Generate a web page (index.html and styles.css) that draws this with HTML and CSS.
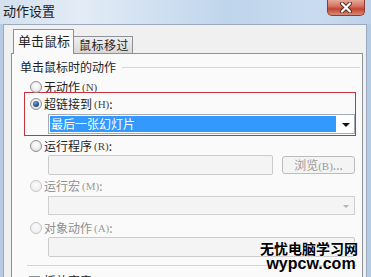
FILE: index.html
```html
<!DOCTYPE html>
<html lang="zh-CN">

<head>
    <meta charset="UTF-8">
    <meta name="viewport" content="width=device-width, initial-scale=1.0">
    <title>动作设置</title>
    <link rel="stylesheet" href="styles.css">
</head>

<body>
    <div class="window">
        <div class="titlebar">
            <span class="title">动作设置</span>
            <div class="close">
                <svg width="14" height="11" viewBox="0 0 14 11">
                    <path d="M3 1.5 L11 9.5 M11 1.5 L3 9.5" stroke="#5a2a22" stroke-width="4" stroke-linecap="round" />
                    <path d="M3 1.5 L11 9.5 M11 1.5 L3 9.5" stroke="#ffffff" stroke-width="2.2" stroke-linecap="round" />
                </svg>
            </div>
        </div>

        <div class="frame">
            <div class="tabs">
                <div class="tab active">单击鼠标</div>
                <div class="tab">鼠标移过</div>
            </div>

            <div class="panel">
                <div class="group-title"><span>单击鼠标时的动作</span></div>

                <div class="option opt-none"><span class="radio"></span>无动作<span class="key">(N)</span></div>

                <div class="highlight">
                    <div class="option opt-link"><span class="radio checked"></span>超链接到<span class="key">(H)</span>:</div>
                    <div class="combo">
                        <div class="combo-value">最后一张幻灯片</div>
                        <span class="arrow"></span>
                    </div>
                </div>

                <div class="option opt-run"><span class="radio"></span>运行程序<span class="key">(R)</span>:</div>
                <div class="field-row">
                    <div class="field"></div>
                    <div class="button">浏览<span class="key">(B)</span>...</div>
                </div>

                <div class="option opt-macro disabled"><span class="radio"></span>运行宏<span class="key">(M)</span>:</div>
                <div class="combo off">
                    <div class="combo-value"></div>
                    <span class="arrow"></span>
                </div>

                <div class="option opt-object disabled"><span class="radio"></span>对象动作<span class="key">(A)</span>:</div>
                <div class="field wide"></div>

                <div class="separator"></div>

                <div class="option opt-sound"><span class="checkbox"></span>播放声音<span class="key">(L)</span>:</div>
            </div>
        </div>

        <div class="watermark">
            <div class="wm-cn">无忧电脑学习网</div>
            <div class="wm-en">wypcw.com</div>
        </div>
    </div>
</body>

</html>
```

FILE: styles.css
```css
body {
    margin: 0;
    width: 371px;
    height: 277px;
    overflow: hidden;
    font-family: "Noto Sans CJK SC", "Liberation Sans", sans-serif;
    font-size: 12px;
    color: #1e1e1e;
}

.window {
    position: relative;
    width: 371px;
    height: 277px;
    overflow: hidden;
    background: linear-gradient(90deg, #b7cbe3 0%, #c6d8ec 50%, #b5cbe4 100%);
    display: flex;
    flex-direction: column;
}

.titlebar {
    height: 24px;
    flex: none;
    position: relative;
    background: linear-gradient(90deg, #d3e0ee 0%, #e3ecf6 22%, #d2e1f1 40%, #bfd5ec 62%, #c9dbef 85%, #bdd2ea 100%);
}

.title {
    position: absolute;
    left: 3px;
    top: 3px;
    font-size: 13px;
    line-height: 16px;
    color: #1a1a1a;
}

.close {
    position: absolute;
    left: 327px;
    top: 0;
    width: 38px;
    height: 16px;
    box-sizing: border-box;
    border: 1px solid #8e3b2f;
    border-top: none;
    border-radius: 0 0 5px 5px;
    background: linear-gradient(180deg, #e6a89a 0%, #d47563 40%, #c24532 60%, #d98a74 100%);
    display: flex;
    align-items: center;
    justify-content: center;
}

.frame {
    flex: 1;
    min-height: 0;
    margin: 0 4px 0 3px;
    background: #f0f0f0;
    border: 1px solid #9aa9bb;
    border-bottom: none;
    display: flex;
    flex-direction: column;
}

.tabs {
    height: 28px;
    flex: none;
    display: flex;
    align-items: flex-end;
    padding-left: 9px;
    position: relative;
    z-index: 1;
}

.tab {
    height: 16px;
    line-height: 16px;
    padding: 0 3px 0 5px;
    border: 1px solid #8d9097;
    border-bottom: none;
    border-left: none;
    background: linear-gradient(180deg, #f0f0f0 0%, #e3e3e3 50%, #d8d8d8 100%);
    font-size: 12px;
    letter-spacing: 0.5px;
    white-space: nowrap;
}

.tab.active {
    height: 24px;
    line-height: 22px;
    padding: 0 3px 0 4px;
    border-left: 1px solid #8d9097;
    background: #fafafa;
    margin-bottom: -1px;
    font-size: 13px;
    letter-spacing: 0;
}

.panel {
    flex: 1;
    min-height: 0;
    overflow: hidden;
    margin: 0 3px 0 7px;
    border: 1px solid #8d9097;
    border-bottom: none;
    background: #fafafa;
    padding: 0 7px 0 18px;
    display: flex;
    flex-direction: column;
}

.group-title {
    flex: none;
    height: 26px;
    line-height: 26px;
    margin: 0 -5px 0 -10px;
    display: flex;
    align-items: center;
    gap: 6px;
}

.group-title::after {
    content: "";
    flex: 1;
    height: 1px;
    background: #d5d5d5;
}

.option {
    flex: none;
    display: flex;
    align-items: center;
    white-space: nowrap;
    line-height: 14px;
}

.option .key {
    font-family: "Liberation Serif", serif;
    font-size: 11px;
    margin-left: 2px;
    color: #444;
}

.opt-none {
    height: 11px;
    margin-top: 1px;
}

.opt-link {
    height: 21px;
}

.opt-run {
    height: 19px;
}

.opt-macro {
    height: 21px;
}

.opt-object {
    height: 19px;
    padding-top: 3px;
}

.opt-sound {
    height: 20px;
    padding-top: 5px;
}

.disabled {
    color: #8e8e8e;
}

.disabled .key {
    color: #9a9a9a;
}

.radio {
    width: 12px;
    height: 12px;
    box-sizing: border-box;
    border-radius: 50%;
    border: 1px solid #8d9094;
    background: radial-gradient(circle at 50% 40%, #ffffff 0%, #ececec 55%, #d2d2d2 100%);
    margin-right: 2px;
    flex: none;
    position: relative;
}

.radio.checked::after {
    content: "";
    position: absolute;
    left: 2px;
    top: 2px;
    width: 6px;
    height: 6px;
    border-radius: 50%;
    background: radial-gradient(circle at 40% 35%, #7aa3d2 0%, #2a5b93 50%, #15355d 100%);
}

.disabled .radio {
    border-color: #c6c6c6;
    background: radial-gradient(circle at 50% 40%, #fbfbfb 0%, #efefef 70%, #e3e3e3 100%);
}

.checkbox {
    width: 11px;
    height: 11px;
    box-sizing: border-box;
    border: 1px solid #8d9094;
    background: linear-gradient(135deg, #e6e6e6, #ffffff);
    margin: 0 4px 0 -1px;
    flex: none;
}

.highlight {
    flex: none;
    margin: 0 -1px 0 -6px;
    padding: 0 0 1px 5px;
    border: 1px solid #c8323c;
}

.combo {
    flex: none;
    height: 20px;
    box-sizing: border-box;
    margin-left: 18px;
    border: 1px solid #a7abb2;
    background: #ffffff;
    padding: 1px 0 1px 1px;
    display: flex;
}

.combo-value {
    flex: 1;
    background: #3399ff;
    color: #ffffff;
    line-height: 16px;
    padding-left: 1px;
    font-size: 12px;
}

.arrow {
    width: 18px;
    flex: none;
    position: relative;
}

.arrow::after {
    content: "";
    position: absolute;
    left: 6px;
    top: 7px;
    border-left: 4px solid transparent;
    border-right: 4px solid transparent;
    border-top: 4px solid #111;
}

.combo.off {
    height: 19px;
    background: #f4f4f4;
    border-color: #cfcfcf;
}

.combo.off .combo-value {
    background: transparent;
}

.combo.off .arrow::after {
    border-top-color: #b2b2b2;
    border-left-width: 3px;
    border-right-width: 3px;
    border-top-width: 3px;
    left: 7px;
}

.field-row {
    flex: none;
    display: flex;
    gap: 9px;
    margin-left: 18px;
    height: 20px;
}

.field {
    flex: none;
    height: 20px;
    box-sizing: border-box;
    width: 225px;
    background: #f4f4f4;
    border: 1px solid #cbcbcb;
    border-radius: 2px;
}

.field.wide {
    width: auto;
    margin-left: 18px;
}

.button {
    flex: 1;
    height: 18px;
    margin-top: 1px;
    box-sizing: border-box;
    border: 1px solid #bcbcbc;
    border-radius: 3px;
    background: #f4f4f4;
    color: #9a9a9a;
    text-align: center;
    line-height: 16px;
    font-size: 12px;
}

.button .key {
    font-family: "Liberation Serif", serif;
    font-size: 11px;
}

.separator {
    flex: none;
    height: 1px;
    margin: 8px -2px 0 -3px;
    background: #d5d5d5;
}

.watermark {
    position: absolute;
    left: 259px;
    top: 240px;
    width: 100px;
    text-align: center;
    color: #000;
    text-shadow: 0 0 2px #fff, 0 0 2px #fff;
}

.wm-cn {
    font-size: 14px;
    font-weight: bold;
    line-height: 17px;
}

.wm-en {
    font-family: "Liberation Sans", Arial, sans-serif;
    font-size: 16px;
    font-weight: bold;
    line-height: 13px;
    margin-left: 4px;
}
```
